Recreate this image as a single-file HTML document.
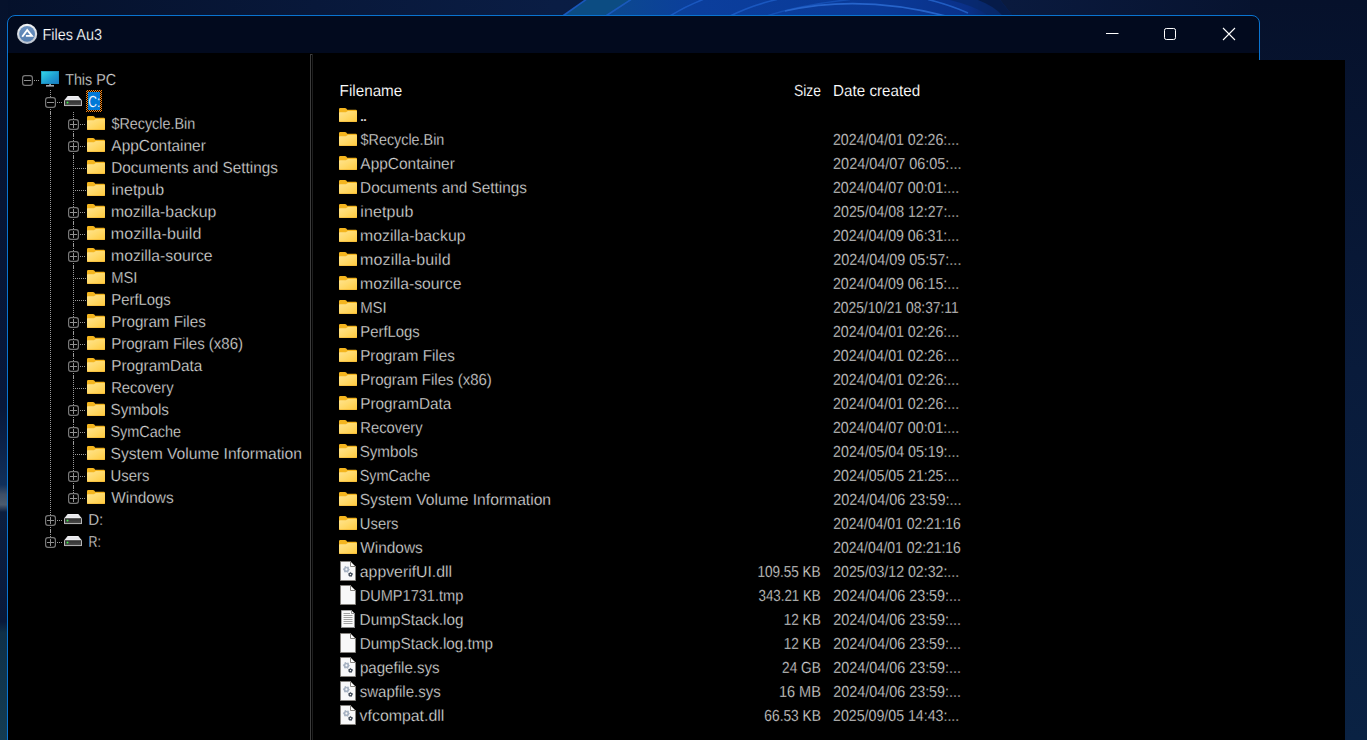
<!DOCTYPE html>
<html lang="en"><head><meta charset="utf-8"><title>Files Au3</title>
<style>
html,body{margin:0;padding:0}
body{width:1367px;height:740px;overflow:hidden;position:relative;background:#05112b;font-family:"Liberation Sans",sans-serif;font-size:16px;color:#e6e6e6}
.a{position:absolute}
.x{position:absolute;white-space:pre;display:block;text-rendering:geometricPrecision;transform-origin:0 0}
.tr{color:#e0e0e0;-webkit-text-stroke:.3px #000}
.li{color:#e0e0e0;-webkit-text-stroke:.3px #000}
.hd{color:#ffffff;-webkit-text-stroke:.12px #000}
.tt{color:#ffffff;-webkit-text-stroke:.2px #020a1e}
.sel{color:#ffffff;-webkit-text-stroke:.15px #0078d7}
svg{position:absolute;overflow:visible}
.frame{left:7px;top:15px;width:1251px;height:760px;border:1px solid #0a74d0;border-radius:8px;background:#020a1e}
.client{background:#000}
.focus{left:86px;top:90px;width:16px;height:22px;background:repeating-conic-gradient(#ff8a14 0 25%,#000 0 50%) 0 0/2px 2px}
.hilite{left:88px;top:92px;width:12px;height:18px;background:#0078d7}
.dv{position:absolute;width:1px;background:repeating-linear-gradient(to bottom,#9a9a9a 0 1px,transparent 1px 2px)}
.dh{position:absolute;height:1px;background:repeating-linear-gradient(to right,#9a9a9a 0 1px,transparent 1px 2px)}
</style></head><body>

<!-- desktop wallpaper -->
<svg class="a" style="left:0;top:0" width="1367" height="740" viewBox="0 0 1367 740">
<defs>
<linearGradient id="wg" x1="0" y1="0" x2="1" y2="0"><stop offset="0" stop-color="#0b3a86"/><stop offset="0.12" stop-color="#0c4890"/><stop offset="0.3" stop-color="#0b3e9c"/><stop offset="0.7" stop-color="#0a3a98"/><stop offset="0.9" stop-color="#0a3088"/><stop offset="1" stop-color="#071c4c"/></linearGradient>
<linearGradient id="bgl" gradientUnits="userSpaceOnUse" x1="0" y1="0" x2="0" y2="740"><stop offset="0" stop-color="#06122c"/><stop offset="0.55" stop-color="#08183a"/><stop offset="0.6" stop-color="#0c2248"/><stop offset="0.655" stop-color="#11305a"/><stop offset="0.668" stop-color="#3e4f66"/><stop offset="0.682" stop-color="#4c5c6e"/><stop offset="0.692" stop-color="#0c1e3e"/><stop offset="0.84" stop-color="#09193a"/><stop offset="0.855" stop-color="#0f3048"/><stop offset="1" stop-color="#143c52"/></linearGradient>
<linearGradient id="bgt" gradientUnits="userSpaceOnUse" x1="0" y1="0" x2="1260" y2="0"><stop offset="0" stop-color="#05112b"/><stop offset="0.25" stop-color="#08183a"/><stop offset="0.44" stop-color="#0a1d44"/><stop offset="0.8" stop-color="#0a1a3e"/><stop offset="1" stop-color="#07132f"/></linearGradient>
<linearGradient id="bgr" gradientUnits="userSpaceOnUse" x1="0" y1="0" x2="0" y2="740"><stop offset="0" stop-color="#06112b"/><stop offset="0.5" stop-color="#091b3b"/><stop offset="1" stop-color="#0a2243"/></linearGradient>
</defs>
<rect x="0" y="0" width="1367" height="740" fill="#06122c"/>
<rect x="0" y="0" width="1260" height="16" fill="url(#bgt)"/>
<rect x="1250" y="0" width="117" height="740" fill="url(#bgr)"/>
<rect x="0" y="0" width="8" height="740" fill="url(#bgl)"/>
<path d="M562 16 L585 0 L1000 0 L1013 16 Z" fill="url(#wg)"/>
<path d="M563 16 L586 0 L632 0 L606 16Z" fill="#0c4c82"/>
<path d="M950 0 L1000 0 L1013 16 L990 16 Q975 6 950 0Z" fill="#08286a" opacity=".75"/>
<path d="M978 0 L1000 0 L1013 16 L1003 16 Q994 6 978 0Z" fill="#061a44" opacity=".85"/>
<g fill="none" stroke="#1d5cc6" stroke-width="1.6" opacity=".85">
<path d="M562 16.5 L586 -.5"/><path d="M605 16.5 L631 -.5"/><path d="M669 16.5 Q686 6 703 -.5"/><path d="M729 16.5 Q752 5 777 -.5"/>
<path d="M765 16.5 Q800 5 850 -.5" opacity=".7"/>
<path d="M785 11 Q860 -6 946 16" stroke="#2c6cd4"/>
<path d="M928 -.5 Q950 5 968 13" stroke="#2564cc"/>
</g>
</svg>

<!-- icon symbols -->
<svg width="0" height="0" style="left:0;top:0"><defs>
<linearGradient id="fb" x1="0" y1="0" x2="1" y2="1"><stop offset="0" stop-color="#ffe490"/><stop offset=".5" stop-color="#ffd968"/><stop offset="1" stop-color="#ffca3e"/></linearGradient>
<linearGradient id="mn" x1="0" y1="0" x2="1" y2="1"><stop offset="0" stop-color="#34dcea"/><stop offset="0.55" stop-color="#1f9fd2"/><stop offset="1" stop-color="#1878c4"/></linearGradient>
<linearGradient id="dt" x1="0" y1="0" x2="0" y2="1"><stop offset="0" stop-color="#f4f4f6"/><stop offset=".5" stop-color="#e2e2e6"/><stop offset="1" stop-color="#f2f2f4"/></linearGradient>
<linearGradient id="df" x1="0" y1="0" x2="0" y2="1"><stop offset="0" stop-color="#2e2e2e"/><stop offset="1" stop-color="#4a4a4a"/></linearGradient>
<symbol id="exm" viewBox="0 0 11 11"><rect x=".6" y=".6" width="9.8" height="9.8" rx="2.4" fill="#000" stroke="#787878" stroke-width="1.2"/><rect x="2" y="5" width="7" height="1" fill="#909090"/></symbol>
<symbol id="exp" viewBox="0 0 11 11"><rect x=".6" y=".6" width="9.8" height="9.8" rx="2.4" fill="#000" stroke="#787878" stroke-width="1.2"/><rect x="2" y="5" width="7" height="1" fill="#909090"/><rect x="5" y="2" width="1" height="7" fill="#909090"/></symbol>
<symbol id="folder" viewBox="0 0 18 14"><path d="M0 1.2Q0 0 1.2 0H6Q6.8 0 7.3 .6L8.2 1.7H16.8Q18 1.7 18 2.9V12.8Q18 14 16.8 14H1.2Q0 14 0 12.8Z" fill="#f4b51e"/><path d="M0 5Q0 4.2 .8 4.2H6.4Q7 4.2 7.4 3.9L8 3.4Q8.4 3.1 9 3.1H17.2Q18 3.1 18 3.9V12.8Q18 14 16.8 14H1.2Q0 14 0 12.8Z" fill="url(#fb)"/><path d="M0 12.8Q0 14 1.2 14H16.8Q18 14 18 12.8V12.3Q18 13.4 16.8 13.4H1.2Q0 13.4 0 12.3Z" fill="#efb02c"/></symbol>
<symbol id="mon" viewBox="0 0 18 16"><rect x="0" y="0" width="18" height="13" fill="url(#mn)"/><rect x=".5" y=".5" width="17" height="12" fill="none" stroke="#1a86b4" stroke-opacity=".6"/><rect x="8.3" y="13" width="1.6" height="1.4" fill="#aab4c0"/><rect x="5" y="14.2" width="8" height="1.3" fill="#c4ccd6"/></symbol>
<symbol id="drv" viewBox="0 0 18 10.3"><path d="M3.7 0H14.3L17.6 4.1H.4Z" fill="url(#dt)"/><rect x="0" y="3.9" width="18" height="6.4" rx=".7" fill="#c4c4c4"/><rect x=".9" y="4.3" width="16.2" height="4.9" fill="url(#df)"/><circle cx="3.5" cy="6.6" r="1.3" fill="#2fd03c" opacity=".35"/><circle cx="3.5" cy="6.6" r=".8" fill="#44e850"/></symbol>
<symbol id="fblank" viewBox="0 0 16 20"><path d="M.5 .5H10.5L15.5 5.5V19.5H.5Z" fill="#f8f8f9" stroke="#85827e"/><path d="M10.5 .5V5.5H15.5Z" fill="#fdfdfd" stroke="#85827e" stroke-linejoin="round"/></symbol>
<symbol id="fdll" viewBox="0 0 16 20"><path d="M.5 .5H10.5L15.5 5.5V19.5H.5Z" fill="#f8f8f9" stroke="#85827e"/><path d="M10.5 .5V5.5H15.5Z" fill="#fdfdfd" stroke="#85827e" stroke-linejoin="round"/>
<circle cx="6.4" cy="8.4" r="1.9" fill="none" stroke="#a6b1c1" stroke-width="1.7"/><circle cx="6.4" cy="8.4" r="2.9" fill="none" stroke="#a6b1c1" stroke-width="1.1" stroke-dasharray="1.3 1.737" stroke-dashoffset=".65"/>
<circle cx="10.5" cy="13.5" r="1.35" fill="none" stroke="#3e4856" stroke-width="1.3"/><circle cx="10.5" cy="13.5" r="2.05" fill="none" stroke="#3e4856" stroke-width=".9" stroke-dasharray=".95 1.197" stroke-dashoffset=".47"/></symbol>
<symbol id="ftxt" viewBox="0 0 16 20"><path d="M1.5 1.5H11.5L14.5 4.5V18.5H1.5Z" fill="#fafafa" stroke="#a4a4a4"/><path d="M14.5 4.5V18.5H1.5" fill="none" stroke="#8a8a8a"/><path d="M11.5 1.5V4.5H14.5Z" fill="#fdfdfd" stroke="#909090" stroke-linejoin="round"/><path d="M3.5 4.5H10M3.5 6.5H12.5M3.5 8.5H12.5M3.5 10.5H12.5M3.5 12.5H12.5M3.5 14.5H12.5" stroke="#a2a2a2" stroke-width="1"/></symbol>
</defs></svg>
<div class="window">
<div class="a frame"></div>
<header class="titlebar">
<svg style="left:16px;top:23px" width="22" height="22" viewBox="0 0 22 22">
<defs><linearGradient id="ig" x1="0" y1="0" x2="0" y2="1"><stop offset="0" stop-color="#6a91c0"/><stop offset="1" stop-color="#557eb0"/></linearGradient><linearGradient id="rg" x1="0" y1="0" x2="0" y2="1"><stop offset="0" stop-color="#f4f6f8"/><stop offset="1" stop-color="#b8c0cc"/></linearGradient></defs>
<circle cx="11.1" cy="10.9" r="10.1" fill="url(#rg)"/><circle cx="11.1" cy="10.9" r="7.9" fill="url(#ig)"/>
<path d="M6.2 13.7 L11.2 7 L15.9 12.9 L9.9 12.9" fill="none" stroke="#fff" stroke-width="1.9"/>
</svg>
<span id="title" class="x tt" style="left:42px;top:17px;line-height:38px;transform:translateX(0.52px) scaleX(0.9043)">Files Au3</span>
<svg style="left:1100px;top:22px" width="150" height="24" viewBox="0 0 150 24" fill="none" stroke="#fff" stroke-width="1">
<path d="M6 11.5H18.5"/><rect x="64.5" y="6.5" width="11" height="11" rx="1.8"/><path d="M123 6 L135 18 M135 6 L123 18" stroke-width="1.1"/>
</svg>
</header>
<main>
<div class="a client" style="left:8px;top:53px;width:1251px;height:700px"></div>
<div class="a client" style="left:8px;top:60px;width:1337px;height:700px"></div>
<nav class="tree" role="tree">
<div class="lines"><i class="dv" style="left:50px;top:90px;height:7px"></i><i class="dv" style="left:50px;top:109px;height:5px"></i><i class="dv" style="left:50px;top:112px;height:403px"></i><i class="dv" style="left:50px;top:527px;height:5px"></i><i class="dv" style="left:50px;top:530px;height:7px"></i><i class="dv" style="left:73px;top:112px;height:7px"></i><i class="dv" style="left:73px;top:131px;height:5px"></i><i class="dv" style="left:73px;top:134px;height:7px"></i><i class="dv" style="left:73px;top:153px;height:5px"></i><i class="dv" style="left:73px;top:156px;height:21px"></i><i class="dv" style="left:73px;top:178px;height:21px"></i><i class="dv" style="left:73px;top:200px;height:7px"></i><i class="dv" style="left:73px;top:219px;height:5px"></i><i class="dv" style="left:73px;top:222px;height:7px"></i><i class="dv" style="left:73px;top:241px;height:5px"></i><i class="dv" style="left:73px;top:244px;height:7px"></i><i class="dv" style="left:73px;top:263px;height:5px"></i><i class="dv" style="left:73px;top:266px;height:21px"></i><i class="dv" style="left:73px;top:288px;height:21px"></i><i class="dv" style="left:73px;top:310px;height:7px"></i><i class="dv" style="left:73px;top:329px;height:5px"></i><i class="dv" style="left:73px;top:332px;height:7px"></i><i class="dv" style="left:73px;top:351px;height:5px"></i><i class="dv" style="left:73px;top:354px;height:7px"></i><i class="dv" style="left:73px;top:373px;height:5px"></i><i class="dv" style="left:73px;top:376px;height:21px"></i><i class="dv" style="left:73px;top:398px;height:7px"></i><i class="dv" style="left:73px;top:417px;height:5px"></i><i class="dv" style="left:73px;top:420px;height:7px"></i><i class="dv" style="left:73px;top:439px;height:5px"></i><i class="dv" style="left:73px;top:442px;height:21px"></i><i class="dv" style="left:73px;top:464px;height:7px"></i><i class="dv" style="left:73px;top:483px;height:5px"></i><i class="dv" style="left:73px;top:486px;height:7px"></i></div>
<div role="treeitem" aria-expanded="true"><i class="dh" style="left:34px;top:80px;width:6px"></i><svg style="left:22px;top:75px" width="11" height="11"><use href="#exm"/></svg><svg style="left:41px;top:71px" width="18" height="16"><use href="#mon"/></svg><span id="t_pc" class="x tr" style="left:65px;top:70px;line-height:22px;transform:translateX(0.17px) scaleX(0.8929)">This PC</span></div>
<div role="treeitem" aria-expanded="true" aria-selected="true"><i class="dh" style="left:57px;top:102px;width:6px"></i><svg style="left:45px;top:97px" width="11" height="11"><use href="#exm"/></svg><svg style="left:64px;top:95.8px" width="18" height="10.3"><use href="#drv"/></svg><b class="a focus"></b><b class="a hilite"></b><span id="t_c" class="x tr sel" style="left:88px;top:92px;line-height:22px;transform:translateX(0.26px) scaleX(0.7493)">C:</span></div>
<div role="treeitem"><i class="dh" style="left:80px;top:124px;width:6px"></i><svg style="left:68px;top:119px" width="11" height="11"><use href="#exp"/></svg><svg style="left:87px;top:116px" width="18" height="14"><use href="#folder"/></svg><span id="t_f0" class="x tr" style="left:111px;top:114px;line-height:22px;transform:translateX(0.51px) scaleX(0.8952)">$Recycle.Bin</span></div>
<div role="treeitem"><i class="dh" style="left:80px;top:146px;width:6px"></i><svg style="left:68px;top:141px" width="11" height="11"><use href="#exp"/></svg><svg style="left:87px;top:138px" width="18" height="14"><use href="#folder"/></svg><span id="t_f1" class="x tr" style="left:111px;top:136px;line-height:22px;transform:translateX(0.32px) scaleX(0.9657)">AppContainer</span></div>
<div role="treeitem"><i class="dh" style="left:75px;top:168px;width:12px"></i><svg style="left:87px;top:160px" width="18" height="14"><use href="#folder"/></svg><span id="t_f2" class="x tr" style="left:111px;top:158px;line-height:22px;transform:translateX(0.16px) scaleX(0.9564)">Documents and Settings</span></div>
<div role="treeitem"><i class="dh" style="left:75px;top:190px;width:12px"></i><svg style="left:87px;top:182px" width="18" height="14"><use href="#folder"/></svg><span id="t_f3" class="x tr" style="left:111px;top:180px;line-height:22px;letter-spacing:0.024px;transform:translateX(0.46px)">inetpub</span></div>
<div role="treeitem"><i class="dh" style="left:80px;top:212px;width:6px"></i><svg style="left:68px;top:207px" width="11" height="11"><use href="#exp"/></svg><svg style="left:87px;top:204px" width="18" height="14"><use href="#folder"/></svg><span id="t_f4" class="x tr" style="left:110px;top:202px;line-height:22px;transform:translateX(0.88px) scaleX(0.9882)">mozilla-backup</span></div>
<div role="treeitem"><i class="dh" style="left:80px;top:234px;width:6px"></i><svg style="left:68px;top:229px" width="11" height="11"><use href="#exp"/></svg><svg style="left:87px;top:226px" width="18" height="14"><use href="#folder"/></svg><span id="t_f5" class="x tr" style="left:110px;top:224px;line-height:22px;letter-spacing:0.142px;transform:translateX(0.66px)">mozilla-build</span></div>
<div role="treeitem"><i class="dh" style="left:80px;top:256px;width:6px"></i><svg style="left:68px;top:251px" width="11" height="11"><use href="#exp"/></svg><svg style="left:87px;top:248px" width="18" height="14"><use href="#folder"/></svg><span id="t_f6" class="x tr" style="left:111px;top:246px;line-height:22px;transform:translateX(0.12px) scaleX(0.9829)">mozilla-source</span></div>
<div role="treeitem"><i class="dh" style="left:75px;top:278px;width:12px"></i><svg style="left:87px;top:270px" width="18" height="14"><use href="#folder"/></svg><span id="t_f7" class="x tr" style="left:111px;top:268px;line-height:22px;transform:translateX(0.25px) scaleX(0.9216)">MSI</span></div>
<div role="treeitem"><i class="dh" style="left:75px;top:300px;width:12px"></i><svg style="left:87px;top:292px" width="18" height="14"><use href="#folder"/></svg><span id="t_f8" class="x tr" style="left:111px;top:290px;line-height:22px;transform:translateX(0.23px) scaleX(0.9302)">PerfLogs</span></div>
<div role="treeitem"><i class="dh" style="left:80px;top:322px;width:6px"></i><svg style="left:68px;top:317px" width="11" height="11"><use href="#exp"/></svg><svg style="left:87px;top:314px" width="18" height="14"><use href="#folder"/></svg><span id="t_f9" class="x tr" style="left:111px;top:312px;line-height:22px;transform:translateX(0.31px) scaleX(0.9482)">Program Files</span></div>
<div role="treeitem"><i class="dh" style="left:80px;top:344px;width:6px"></i><svg style="left:68px;top:339px" width="11" height="11"><use href="#exp"/></svg><svg style="left:87px;top:336px" width="18" height="14"><use href="#folder"/></svg><span id="t_f10" class="x tr" style="left:111px;top:334px;line-height:22px;transform:translateX(0.15px) scaleX(0.9390)">Program Files (x86)</span></div>
<div role="treeitem"><i class="dh" style="left:80px;top:366px;width:6px"></i><svg style="left:68px;top:361px" width="11" height="11"><use href="#exp"/></svg><svg style="left:87px;top:358px" width="18" height="14"><use href="#folder"/></svg><span id="t_f11" class="x tr" style="left:111px;top:356px;line-height:22px;transform:translateX(0.26px) scaleX(0.9574)">ProgramData</span></div>
<div role="treeitem"><i class="dh" style="left:75px;top:388px;width:12px"></i><svg style="left:87px;top:380px" width="18" height="14"><use href="#folder"/></svg><span id="t_f12" class="x tr" style="left:111px;top:378px;line-height:22px;transform:translateX(0.13px) scaleX(0.9254)">Recovery</span></div>
<div role="treeitem"><i class="dh" style="left:80px;top:410px;width:6px"></i><svg style="left:68px;top:405px" width="11" height="11"><use href="#exp"/></svg><svg style="left:87px;top:402px" width="18" height="14"><use href="#folder"/></svg><span id="t_f13" class="x tr" style="left:110px;top:400px;line-height:22px;transform:translateX(0.55px) scaleX(0.9511)">Symbols</span></div>
<div role="treeitem"><i class="dh" style="left:80px;top:432px;width:6px"></i><svg style="left:68px;top:427px" width="11" height="11"><use href="#exp"/></svg><svg style="left:87px;top:424px" width="18" height="14"><use href="#folder"/></svg><span id="t_f14" class="x tr" style="left:110px;top:422px;line-height:22px;transform:translateX(0.4px) scaleX(0.9029)">SymCache</span></div>
<div role="treeitem"><i class="dh" style="left:75px;top:454px;width:12px"></i><svg style="left:87px;top:446px" width="18" height="14"><use href="#folder"/></svg><span id="t_f15" class="x tr" style="left:110px;top:444px;line-height:22px;transform:translateX(0.49px) scaleX(0.9782)">System Volume Information</span></div>
<div role="treeitem"><i class="dh" style="left:80px;top:476px;width:6px"></i><svg style="left:68px;top:471px" width="11" height="11"><use href="#exp"/></svg><svg style="left:87px;top:468px" width="18" height="14"><use href="#folder"/></svg><span id="t_f16" class="x tr" style="left:110px;top:466px;line-height:22px;transform:translateX(0.62px) scaleX(0.9272)">Users</span></div>
<div role="treeitem"><i class="dh" style="left:80px;top:498px;width:6px"></i><svg style="left:68px;top:493px" width="11" height="11"><use href="#exp"/></svg><svg style="left:87px;top:490px" width="18" height="14"><use href="#folder"/></svg><span id="t_f17" class="x tr" style="left:111px;top:488px;line-height:22px;transform:translateX(0.18px) scaleX(0.9628)">Windows</span></div>
<div role="treeitem"><i class="dh" style="left:57px;top:520px;width:6px"></i><svg style="left:45px;top:515px" width="11" height="11"><use href="#exp"/></svg><svg style="left:64px;top:513.8px" width="18" height="10.3"><use href="#drv"/></svg><span id="t_d" class="x tr" style="left:88px;top:510px;line-height:22px;transform:translateX(0.14px) scaleX(0.9461)">D:</span></div>
<div role="treeitem"><i class="dh" style="left:57px;top:542px;width:6px"></i><svg style="left:45px;top:537px" width="11" height="11"><use href="#exp"/></svg><svg style="left:64px;top:535.8px" width="18" height="10.3"><use href="#drv"/></svg><span id="t_r" class="x tr" style="left:88px;top:532px;line-height:22px;transform:translateX(0.45px) scaleX(0.7730)">R:</span></div>
</nav>
<div class="splitter"><i class="a" style="left:310px;top:54px;width:1px;height:700px;background:#3c3c3c"></i><i class="a" style="left:311px;top:54px;width:1px;height:1px;background:#3c3c3c"></i><i class="a" style="left:312px;top:54px;width:1px;height:700px;background:#1e1e1e"></i></div>
<section class="list" role="table">
<div class="head" role="row"><span id="h_fn" class="x hd" style="left:339px;top:80px;line-height:24px;transform:translateX(0.62px) scaleX(0.9518)">Filename</span><span id="h_sz" class="x hd" style="left:793px;top:80px;line-height:24px;transform:translateX(0.88px) scaleX(0.8671)">Size</span><span id="h_dc" class="x hd" style="left:833px;top:80px;line-height:24px;transform:translateX(0.1px) scaleX(0.9494)">Date created</span></div>
<div class="row" role="row"><svg style="left:339px;top:108px" width="18" height="14"><use href="#folder"/></svg><span id="l_up" class="x li" style="left:359px;top:105px;line-height:24px;letter-spacing:-1.450px;transform:translateX(0.85px);-webkit-text-stroke:.2px #e0e0e0">..</span></div>
<div class="row" role="row"><svg style="left:339px;top:132px" width="18" height="14"><use href="#folder"/></svg><span id="l_f0" class="x li" style="left:360px;top:129px;line-height:24px;transform:translateX(0.6px) scaleX(0.8963)">$Recycle.Bin</span><span id="l_d0" class="x li" style="left:832px;top:129px;line-height:24px;transform:translateX(0.95px) scaleX(0.8862)">2024/04/01 02:26:...</span></div>
<div class="row" role="row"><svg style="left:339px;top:156px" width="18" height="14"><use href="#folder"/></svg><span id="l_f1" class="x li" style="left:360px;top:153px;line-height:24px;transform:translateX(0.37px) scaleX(0.9654)">AppContainer</span><span id="l_d1" class="x li" style="left:833px;top:153px;line-height:24px;transform:translateX(0.09px) scaleX(0.9014)">2024/04/07 06:05:...</span></div>
<div class="row" role="row"><svg style="left:339px;top:180px" width="18" height="14"><use href="#folder"/></svg><span id="l_f2" class="x li" style="left:360px;top:177px;line-height:24px;transform:translateX(0.12px) scaleX(0.9562)">Documents and Settings</span><span id="l_d2" class="x li" style="left:832px;top:177px;line-height:24px;transform:translateX(0.95px) scaleX(0.8862)">2024/04/07 00:01:...</span></div>
<div class="row" role="row"><svg style="left:339px;top:204px" width="18" height="14"><use href="#folder"/></svg><span id="l_f3" class="x li" style="left:360px;top:201px;line-height:24px;letter-spacing:0.103px;transform:translateX(0.23px)">inetpub</span><span id="l_d3" class="x li" style="left:833px;top:201px;line-height:24px;transform:translateX(0.21px) scaleX(0.8846)">2025/04/08 12:27:...</span></div>
<div class="row" role="row"><svg style="left:339px;top:228px" width="18" height="14"><use href="#folder"/></svg><span id="l_f4" class="x li" style="left:360px;top:225px;line-height:24px;transform:translateX(0.06px) scaleX(0.9877)">mozilla-backup</span><span id="l_d4" class="x li" style="left:832px;top:225px;line-height:24px;transform:translateX(0.95px) scaleX(0.8862)">2024/04/09 06:31:...</span></div>
<div class="row" role="row"><svg style="left:339px;top:252px" width="18" height="14"><use href="#folder"/></svg><span id="l_f5" class="x li" style="left:360px;top:249px;line-height:24px;letter-spacing:0.131px;transform:translateX(0.12px)">mozilla-build</span><span id="l_d5" class="x li" style="left:833px;top:249px;line-height:24px;transform:translateX(0.2px) scaleX(0.9005)">2024/04/09 05:57:...</span></div>
<div class="row" role="row"><svg style="left:339px;top:276px" width="18" height="14"><use href="#folder"/></svg><span id="l_f6" class="x li" style="left:360px;top:273px;line-height:24px;transform:translateX(0.1px) scaleX(0.9824)">mozilla-source</span><span id="l_d6" class="x li" style="left:832px;top:273px;line-height:24px;transform:translateX(0.88px) scaleX(0.8867)">2024/04/09 06:15:...</span></div>
<div class="row" role="row"><svg style="left:339px;top:300px" width="18" height="14"><use href="#folder"/></svg><span id="l_f7" class="x li" style="left:360px;top:297px;line-height:24px;transform:translateX(0.15px) scaleX(0.9351)">MSI</span><span id="l_d7" class="x li" style="left:833px;top:297px;line-height:24px;transform:translateX(0.19px) scaleX(0.8612)">2025/10/21 08:37:11</span></div>
<div class="row" role="row"><svg style="left:339px;top:324px" width="18" height="14"><use href="#folder"/></svg><span id="l_f8" class="x li" style="left:360px;top:321px;line-height:24px;transform:translateX(0.33px) scaleX(0.9263)">PerfLogs</span><span id="l_d8" class="x li" style="left:832px;top:321px;line-height:24px;transform:translateX(0.95px) scaleX(0.8862)">2024/04/01 02:26:...</span></div>
<div class="row" role="row"><svg style="left:339px;top:348px" width="18" height="14"><use href="#folder"/></svg><span id="l_f9" class="x li" style="left:360px;top:345px;line-height:24px;transform:translateX(0.19px) scaleX(0.9494)">Program Files</span><span id="l_d9" class="x li" style="left:832px;top:345px;line-height:24px;transform:translateX(0.95px) scaleX(0.8862)">2024/04/01 02:26:...</span></div>
<div class="row" role="row"><svg style="left:339px;top:372px" width="18" height="14"><use href="#folder"/></svg><span id="l_f10" class="x li" style="left:360px;top:369px;line-height:24px;transform:translateX(0.13px) scaleX(0.9378)">Program Files (x86)</span><span id="l_d10" class="x li" style="left:832px;top:369px;line-height:24px;transform:translateX(0.95px) scaleX(0.8862)">2024/04/01 02:26:...</span></div>
<div class="row" role="row"><svg style="left:339px;top:396px" width="18" height="14"><use href="#folder"/></svg><span id="l_f11" class="x li" style="left:360px;top:393px;line-height:24px;transform:translateX(0.15px) scaleX(0.9586)">ProgramData</span><span id="l_d11" class="x li" style="left:832px;top:393px;line-height:24px;transform:translateX(0.95px) scaleX(0.8862)">2024/04/01 02:26:...</span></div>
<div class="row" role="row"><svg style="left:339px;top:420px" width="18" height="14"><use href="#folder"/></svg><span id="l_f12" class="x li" style="left:360px;top:417px;line-height:24px;transform:translateX(0.35px) scaleX(0.9219)">Recovery</span><span id="l_d12" class="x li" style="left:832px;top:417px;line-height:24px;transform:translateX(0.95px) scaleX(0.8862)">2024/04/07 00:01:...</span></div>
<div class="row" role="row"><svg style="left:339px;top:444px" width="18" height="14"><use href="#folder"/></svg><span id="l_f13" class="x li" style="left:359px;top:441px;line-height:24px;transform:translateX(0.64px) scaleX(0.9498)">Symbols</span><span id="l_d13" class="x li" style="left:833px;top:441px;line-height:24px;transform:translateX(0.11px) scaleX(0.8870)">2024/05/04 05:19:...</span></div>
<div class="row" role="row"><svg style="left:339px;top:468px" width="18" height="14"><use href="#folder"/></svg><span id="l_f14" class="x li" style="left:359px;top:465px;line-height:24px;transform:translateX(0.68px) scaleX(0.9012)">SymCache</span><span id="l_d14" class="x li" style="left:833px;top:465px;line-height:24px;transform:translateX(0.19px) scaleX(0.8853)">2024/05/05 21:25:...</span></div>
<div class="row" role="row"><svg style="left:339px;top:492px" width="18" height="14"><use href="#folder"/></svg><span id="l_f15" class="x li" style="left:359px;top:489px;line-height:24px;transform:translateX(0.68px) scaleX(0.9783)">System Volume Information</span><span id="l_d15" class="x li" style="left:833px;top:489px;line-height:24px;transform:translateX(0.22px) scaleX(0.9005)">2024/04/06 23:59:...</span></div>
<div class="row" role="row"><svg style="left:339px;top:516px" width="18" height="14"><use href="#folder"/></svg><span id="l_f16" class="x li" style="left:359px;top:513px;line-height:24px;transform:translateX(0.87px) scaleX(0.9243)">Users</span><span id="l_d16" class="x li" style="left:833px;top:513px;line-height:24px;transform:translateX(0.15px) scaleX(0.8699)">2024/04/01 02:21:16</span></div>
<div class="row" role="row"><svg style="left:339px;top:540px" width="18" height="14"><use href="#folder"/></svg><span id="l_f17" class="x li" style="left:360px;top:537px;line-height:24px;transform:translateX(0.18px) scaleX(0.9641)">Windows</span><span id="l_d17" class="x li" style="left:833px;top:537px;line-height:24px;transform:translateX(0.15px) scaleX(0.8699)">2024/04/01 02:21:16</span></div>
<div class="row" role="row"><svg style="left:340px;top:561px" width="16" height="20"><use href="#fdll"/></svg><span id="l_g0" class="x li" style="left:359px;top:561px;line-height:24px;transform:translateX(0.82px) scaleX(0.9879)">appverifUI.dll</span><span id="l_s0" class="x li" style="left:757px;top:561px;line-height:24px;transform:translateX(0.39px) scaleX(0.8460)">109.55 KB</span><span id="l_e0" class="x li" style="left:833px;top:561px;line-height:24px;transform:translateX(0.2px) scaleX(0.8847)">2025/03/12 02:32:...</span></div>
<div class="row" role="row"><svg style="left:340px;top:585px" width="16" height="20"><use href="#fblank"/></svg><span id="l_g1" class="x li" style="left:359px;top:585px;line-height:24px;transform:translateX(0.7px) scaleX(0.9101)">DUMP1731.tmp</span><span id="l_s1" class="x li" style="left:758px;top:585px;line-height:24px;transform:translateX(0.56px) scaleX(0.8320)">343.21 KB</span><span id="l_e1" class="x li" style="left:833px;top:585px;line-height:24px;transform:translateX(0.17px) scaleX(0.8987)">2024/04/06 23:59:...</span></div>
<div class="row" role="row"><svg style="left:340px;top:609px" width="16" height="20"><use href="#ftxt"/></svg><span id="l_g2" class="x li" style="left:359px;top:609px;line-height:24px;transform:translateX(0.58px) scaleX(0.9582)">DumpStack.log</span><span id="l_s2" class="x li" style="left:783px;top:609px;line-height:24px;transform:translateX(0.63px) scaleX(0.8507)">12 KB</span><span id="l_e2" class="x li" style="left:833px;top:609px;line-height:24px;transform:translateX(0.17px) scaleX(0.8987)">2024/04/06 23:59:...</span></div>
<div class="row" role="row"><svg style="left:340px;top:633px" width="16" height="20"><use href="#fblank"/></svg><span id="l_g3" class="x li" style="left:359px;top:633px;line-height:24px;transform:translateX(0.69px) scaleX(0.9550)">DumpStack.log.tmp</span><span id="l_s3" class="x li" style="left:783px;top:633px;line-height:24px;transform:translateX(0.63px) scaleX(0.8507)">12 KB</span><span id="l_e3" class="x li" style="left:833px;top:633px;line-height:24px;transform:translateX(0.17px) scaleX(0.8987)">2024/04/06 23:59:...</span></div>
<div class="row" role="row"><svg style="left:340px;top:657px" width="16" height="20"><use href="#fdll"/></svg><span id="l_g4" class="x li" style="left:359px;top:657px;line-height:24px;transform:translateX(0.94px) scaleX(0.9430)">pagefile.sys</span><span id="l_s4" class="x li" style="left:782px;top:657px;line-height:24px;transform:translateX(0.07px) scaleX(0.8534)">24 GB</span><span id="l_e4" class="x li" style="left:833px;top:657px;line-height:24px;transform:translateX(0.17px) scaleX(0.8987)">2024/04/06 23:59:...</span></div>
<div class="row" role="row"><svg style="left:340px;top:681px" width="16" height="20"><use href="#fdll"/></svg><span id="l_g5" class="x li" style="left:359px;top:681px;line-height:24px;transform:translateX(0.77px) scaleX(0.9383)">swapfile.sys</span><span id="l_s5" class="x li" style="left:778px;top:681px;line-height:24px;transform:translateX(0.89px) scaleX(0.9073)">16 MB</span><span id="l_e5" class="x li" style="left:833px;top:681px;line-height:24px;transform:translateX(0.17px) scaleX(0.8987)">2024/04/06 23:59:...</span></div>
<div class="row" role="row"><svg style="left:340px;top:705px" width="16" height="20"><use href="#fdll"/></svg><span id="l_g6" class="x li" style="left:359px;top:705px;line-height:24px;transform:translateX(0.6px) scaleX(0.9923)">vfcompat.dll</span><span id="l_s6" class="x li" style="left:764px;top:705px;line-height:24px;transform:translateX(0.37px) scaleX(0.8573)">66.53 KB</span><span id="l_e6" class="x li" style="left:833px;top:705px;line-height:24px;transform:translateX(0.07px) scaleX(0.8863)">2025/09/05 14:43:...</span></div>
</section>
</main>
</div>
</body></html>
